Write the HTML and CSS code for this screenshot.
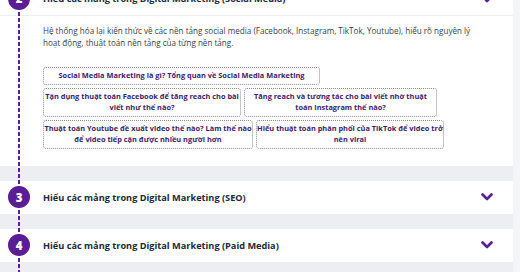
FILE: index.html
```
<!DOCTYPE html>
<html lang="vi">
<head>
  <meta charset="UTF-8">
  <title>Lộ trình Digital Marketing</title>
  <link rel="stylesheet" href="styles.css">
</head>
<body>

  <div class="page">
    <!-- đường timeline nét đứt -->
    <div class="timeline"></div>

    <div class="steps">
      <!-- Bước 2: đang mở -->
      <div class="step open">
        <div class="step-head">
          <span class="num">2</span>
          <span class="step-title">Hiểu các mảng trong Digital Marketing (Social Media)</span>
          <svg class="chev" viewBox="0 0 12 8"><polyline points="1.5,1.5 6,6 10.5,1.5"/></svg>
        </div>
        <div class="step-body">
          <p class="desc">Hệ thống hóa lại kiến thức về các nền tảng social media (Facebook, Instagram, TikTok, Youtube), hiểu rõ nguyên lý hoạt động, thuật toán nền tảng của từng nền tảng.</p>
          <div class="chips">
            <a class="chip chip-intro">Social Media Marketing là gì? Tổng quan về Social Media Marketing</a>
            <a class="chip chip-fb">Tận dụng thuật toán Facebook để tăng reach cho bài viết như thế nào?</a>
            <a class="chip chip-ig">Tăng reach và tương tác cho bài viết nhờ thuật toán Instagram thế nào?</a>
            <a class="chip chip-yt">Thuật toán Youtube đề xuất video thế nào? Làm thế nào để video tiếp cận được nhiều người hơn</a>
            <a class="chip chip-tt">Hiểu thuật toán phân phối của TikTok để video trở nên viral</a>
          </div>
        </div>
      </div>

      <div class="step">
        <div class="step-head">
          <span class="num">3</span>
          <span class="step-title">Hiểu các mảng trong Digital Marketing (SEO)</span>
          <svg class="chev" viewBox="0 0 12 8"><polyline points="1.5,1.5 6,6 10.5,1.5"/></svg>
        </div>
      </div>

      <div class="step">
        <div class="step-head">
          <span class="num">4</span>
          <span class="step-title">Hiểu các mảng trong Digital Marketing (Paid Media)</span>
          <svg class="chev" viewBox="0 0 12 8"><polyline points="1.5,1.5 6,6 10.5,1.5"/></svg>
        </div>
      </div>
    </div>
  </div>

</body>
</html>
```

FILE: styles.css
```
body {
  margin: 0;
  background-color: #f4f5f7;
  font-family: "Open Sans", "Noto Sans", sans-serif;
  overflow: hidden;
}
.page {
  position: relative;
  width: 513px;
  height: 272px;
  background-color: #eceef1;
  overflow: hidden;
}
/* Đường nét đứt dọc */
.timeline {
  position: absolute;
  top: 0;
  bottom: 0;
  left: 18px;
  width: 2px;
  background: repeating-linear-gradient(to bottom, #5b1d94 0, #5b1d94 4px, transparent 4px, transparent 6px);
  z-index: 1;
}
.steps {
  margin-top: -18px;
}
.step {
  background-color: #fff;
  margin-bottom: 15px;
}
.step-head {
  display: flex;
  align-items: center;
  height: 33px;
  padding: 0 20px 0 8px;
}
.open .step-head {
  border-bottom: 1px solid #eef0f2;
}
.num {
  position: relative;
  z-index: 2;
  width: 22px;
  height: 22px;
  border-radius: 50%;
  background-color: #5b1d94;
  color: #fff;
  font-weight: 800;
  font-size: 11.5px;
  display: flex;
  align-items: center;
  justify-content: center;
  margin-right: 13px;
}
.step-title {
  flex: 1;
  font-size: 9.2px;
  font-weight: 700;
  color: #1d2740;
}
.chev {
  width: 12px;
  height: 8px;
  fill: none;
  stroke: #5b1d94;
  stroke-width: 2.6;
  stroke-linecap: round;
  stroke-linejoin: round;
}
.step-body {
  padding: 9px 24px 17px 43px;
}
.desc {
  margin: 0;
  font-size: 8.1px;
  line-height: 12px;
  color: #3a3f4a;
}
.chips {
  display: flex;
  flex-wrap: wrap;
  gap: 3px 3px;
  margin-top: 18px;
}
.chip {
  box-sizing: border-box;
  border: 1px dotted #8c8c94;
  border-radius: 3px;
  padding: 2px 0;
  font-size: 7.4px;
  line-height: 11.5px;
  font-weight: 700;
  color: #3b1a6c;
  text-align: center;
}
.chip-intro { width: 277px; margin-right: 150px; }
.chip-fb { width: 198px; }
.chip-ig { width: 193px; }
.chip-yt { width: 210px; }
.chip-tt { width: 188px; }
```
